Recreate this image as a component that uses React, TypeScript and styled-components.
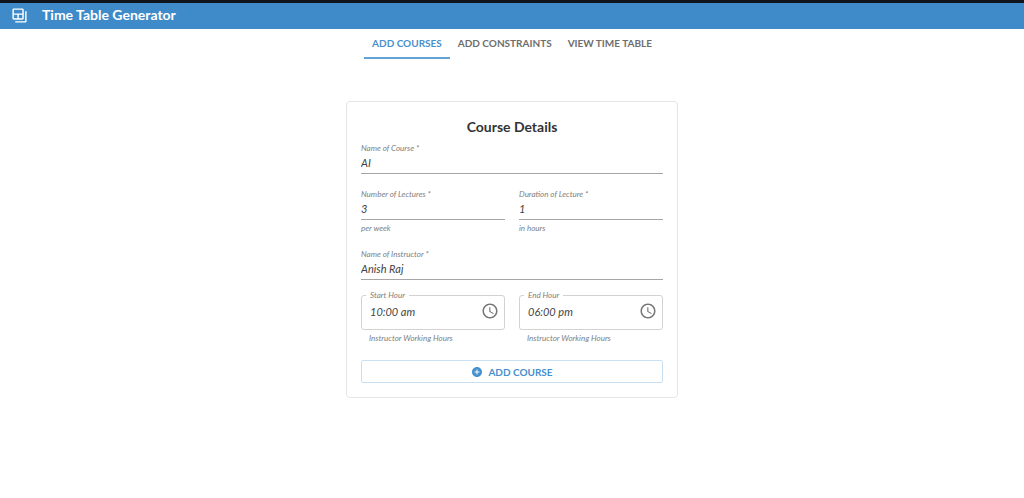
import React, { useState } from "react";
import styled, { createGlobalStyle } from "styled-components";

const GlobalStyle = createGlobalStyle`
  *, *::before, *::after { box-sizing: border-box; }
  body {
    margin: 0;
    background: #fff;
    color: #333;
    font-family: Lato, "Liberation Sans", sans-serif;
  }
  button, input { font-family: inherit; }
`;

const AppBar = styled.header`
  display: flex;
  align-items: center;
  gap: 14px;
  height: 29px;
  padding: 0 11px 2px;
  border-top: 3px solid #10151b;
  background: #3f8bc9;
  color: #fff;
`;

const Brand = styled.h1`
  margin: 0;
  font-size: 14px;
  line-height: 20px;
  font-weight: 700;
`;

const Icon = styled.svg<{ $size: number }>`
  flex: none;
  display: block;
  width: ${(p) => p.$size}px;
  height: ${(p) => p.$size}px;
  fill: currentColor;
`;

const Tabs = styled.nav`
  display: flex;
  justify-content: center;
`;

const Tab = styled.button<{ $active: boolean }>`
  height: 30px;
  padding: 0 8px;
  border: 0;
  border-bottom: 2px solid ${(p) => (p.$active ? "#64a3d8" : "transparent")};
  background: none;
  color: ${(p) => (p.$active ? "#4a90cb" : "#6e6e6e")};
  font-size: 10px;
  font-weight: 700;
  text-transform: uppercase;
  cursor: pointer;
`;

const Card = styled.form`
  display: flex;
  flex-direction: column;
  gap: 14px;
  width: 100%;
  max-width: 332px;
  margin: 42px auto 0;
  padding: 15px 14px 14px;
  border: 1px solid #e6e6e6;
  border-radius: 4px;
`;

const Title = styled.h2`
  margin: 0 0 -9px;
  font-size: 14px;
  line-height: 20px;
  font-weight: 700;
  text-align: center;
`;

const Row = styled.div`
  display: grid;
  grid-template-columns: 1fr 1fr;
  gap: 14px;
`;

const Field = styled.div`
  display: flex;
  flex-direction: column;
  min-width: 0;
  font-style: italic;
`;

const Label = styled.label`
  display: block;
  color: #808080;
  font-size: 8px;
  line-height: 12px;
`;

const TextInput = styled.input`
  width: 100%;
  height: 20px;
  padding: 0 0 3px;
  border: 0;
  border-bottom: 1px solid #a6a6a6;
  outline: 0;
  background: none;
  color: #444;
  font-size: 11px;
  font-style: italic;
`;

const Helper = styled.span<{ $inset?: boolean }>`
  padding: 2px ${(p) => (p.$inset ? 8 : 0)}px 0;
  color: #808080;
  font-size: 8px;
  line-height: 12px;
`;

const Outline = styled.fieldset`
  display: flex;
  align-items: center;
  min-width: 0;
  height: 41px;
  margin: -5px 0 0;
  padding: 0 5px 0 8px;
  border: 1px solid #d2d2d2;
  border-radius: 3px;
  color: #757575;
`;

const Legend = styled.legend`
  margin-left: -4px;
  padding: 0 4px;
`;

const TimeInput = styled(TextInput)`
  flex: 1;
  min-width: 0;
  padding: 1px 0 0;
  border: 0;
`;

const IconButton = styled.button`
  padding: 0;
  border: 0;
  background: none;
  color: inherit;
  cursor: pointer;
`;

const Submit = styled.button`
  display: flex;
  align-items: center;
  justify-content: center;
  gap: 5px;
  height: 23px;
  margin-top: 2px;
  border: 1px solid #c9e0f3;
  border-radius: 2px;
  background: none;
  color: #4590cd;
  font-size: 10px;
  font-weight: 700;
  text-transform: uppercase;
  cursor: pointer;
`;

type FieldProps = { id: string; label: string; value: string; helper?: string };

function LineField({ id, label, value, helper }: FieldProps) {
  return (
    <Field>
      <Label htmlFor={id}>{label} *</Label>
      <TextInput id={id} defaultValue={value} required />
      {helper && <Helper>{helper}</Helper>}
    </Field>
  );
}

function TimeField({ id, label, value, helper }: FieldProps) {
  return (
    <Field>
      <Outline>
        <Legend>
          <Label htmlFor={id}>{label}</Label>
        </Legend>
        <TimeInput id={id} defaultValue={value} />
        <IconButton type="button" aria-label={`Choose ${label}`}>
          <Icon $size={18} viewBox="0 0 24 24">
            <path d="M11.99 2C6.47 2 2 6.48 2 12s4.47 10 9.99 10C17.52 22 22 17.52 22 12S17.52 2 11.99 2zM12 20c-4.42 0-8-3.58-8-8s3.58-8 8-8 8 3.58 8 8-3.58 8-8 8zm.5-13H11v6l5.25 3.15.75-1.23-4.5-2.67z" />
          </Icon>
        </IconButton>
      </Outline>
      <Helper $inset>{helper}</Helper>
    </Field>
  );
}

const tabs = ["Add Courses", "Add Constraints", "View Time Table"];

export default function App() {
  const [active, setActive] = useState(0);
  return (
    <>
      <GlobalStyle />
      <AppBar>
        <Icon $size={17} viewBox="0 0 24 24">
          <path d="M20 6v14H6v2h14c1.1 0 2-.9 2-2V6h-2z" />
          <path d="M16 2H4c-1.1 0-2 .9-2 2v12c0 1.1.9 2 2 2h12c1.1 0 2-.9 2-2V4c0-1.1-.9-2-2-2zM9 16H4v-5h5v5zm7 0h-5v-5h5v5zm0-7H4V4h12v5z" />
        </Icon>
        <Brand>Time Table Generator</Brand>
      </AppBar>
      <Tabs>
        {tabs.map((name, i) => (
          <Tab key={name} type="button" $active={i === active} onClick={() => setActive(i)}>
            {name}
          </Tab>
        ))}
      </Tabs>
      <main>
        <Card onSubmit={(e) => e.preventDefault()}>
          <Title>Course Details</Title>
          <LineField id="course" label="Name of Course" value="AI" />
          <Row>
            <LineField id="lectures" label="Number of Lectures" value="3" helper="per week" />
            <LineField id="duration" label="Duration of Lecture" value="1" helper="in hours" />
          </Row>
          <LineField id="instructor" label="Name of Instructor" value="Anish Raj" />
          <Row>
            <TimeField id="start" label="Start Hour" value="10:00 am" helper="Instructor Working Hours" />
            <TimeField id="end" label="End Hour" value="06:00 pm" helper="Instructor Working Hours" />
          </Row>
          <Submit type="submit">
            <Icon $size={12} viewBox="0 0 24 24">
              <path d="M12 2C6.48 2 2 6.48 2 12s4.48 10 10 10 10-4.48 10-10S17.52 2 12 2zm5 11h-4v4h-2v-4H7v-2h4V7h2v4h4v2z" />
            </Icon>
            Add Course
          </Submit>
        </Card>
      </main>
    </>
  );
}
